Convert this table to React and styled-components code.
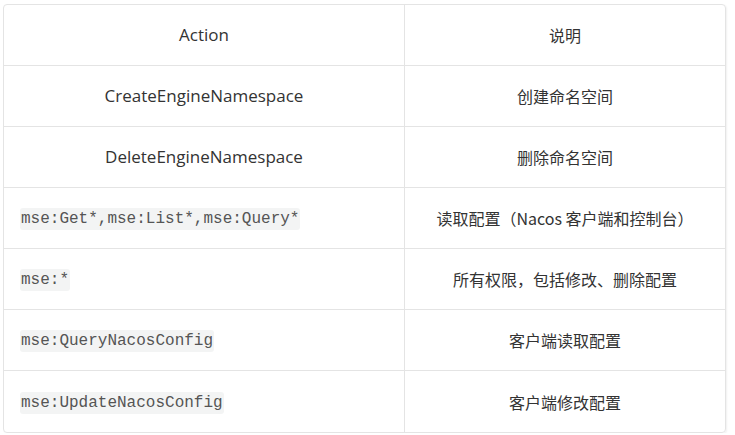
import styled, { createGlobalStyle } from "styled-components";

const GlobalStyle = createGlobalStyle`
    body {
        margin: 0;
        background: #fff;
        font-family: "Open Sans", "Noto Sans CJK SC", sans-serif;
        color: #333;
    }
`;

const Page = styled.div`
    padding: 4px 9px 0 3px;
`;

const Table = styled.table`
    width: 723px;
    border-collapse: separate;
    border-spacing: 0;
    border: 1px solid #e4e4e4;
    border-radius: 4px;
    box-shadow: 1px 1px 2px rgba(0, 0, 0, 0.06);
    table-layout: fixed;
`;

const Row = styled.tr`
    &:last-child td {
        border-bottom: none;
    }
`;

// first column is latin text, a bit larger like the original's YaHei latin glyphs
const Cell = styled.td`
    height: 61px;
    padding: 0 16px;
    box-sizing: border-box;
    border-bottom: 1px solid #e4e4e4;
    border-right: ${props => props.last ? 'none' : '1px solid #e4e4e4'};
    text-align: ${props => props.align || 'center'};
    vertical-align: middle;
    font-weight: normal;
    font-size: ${props => props.last ? '16px' : '17px'};
    font-family: ${props => props.last ? '"Noto Sans CJK SC", "Open Sans", sans-serif' : '"Open Sans", sans-serif'};
    line-height: 24px;
    color: #333;
`;

const HeadCell = styled(Cell).attrs({ as: 'th' })``;

const Code = styled.code`
    font-family: "Liberation Mono", "Courier New", monospace;
    font-size: 16px;
    background: #f3f4f4;
    border-radius: 3px;
    padding: 2px 1px;
    color: #555;
`;

const rows = [
    { action: 'CreateEngineNamespace', desc: '创建命名空间' },
    { action: 'DeleteEngineNamespace', desc: '删除命名空间' },
    { action: 'mse:Get*,mse:List*,mse:Query*', desc: '读取配置（Nacos 客户端和控制台）', code: true },
    { action: 'mse:*', desc: '所有权限，包括修改、删除配置', code: true },
    { action: 'mse:QueryNacosConfig', desc: '客户端读取配置', code: true },
    { action: 'mse:UpdateNacosConfig', desc: '客户端修改配置', code: true },
];

const App = () => {
    return (
        <Page>
            <GlobalStyle />
            <Table>
                <colgroup>
                    <col style={{ width: 401 }} />
                    <col />
                </colgroup>
                <thead>
                    <Row>
                        <HeadCell>Action</HeadCell>
                        <HeadCell last>说明</HeadCell>
                    </Row>
                </thead>
                <tbody>
                    {rows.map((row, index) => (
                        <Row key={index}>
                            <Cell align={row.code ? 'left' : 'center'}>
                                {row.code ? <Code>{row.action}</Code> : row.action}
                            </Cell>
                            <Cell last>{row.desc}</Cell>
                        </Row>
                    ))}
                </tbody>
            </Table>
        </Page>
    );
}

export default App;
